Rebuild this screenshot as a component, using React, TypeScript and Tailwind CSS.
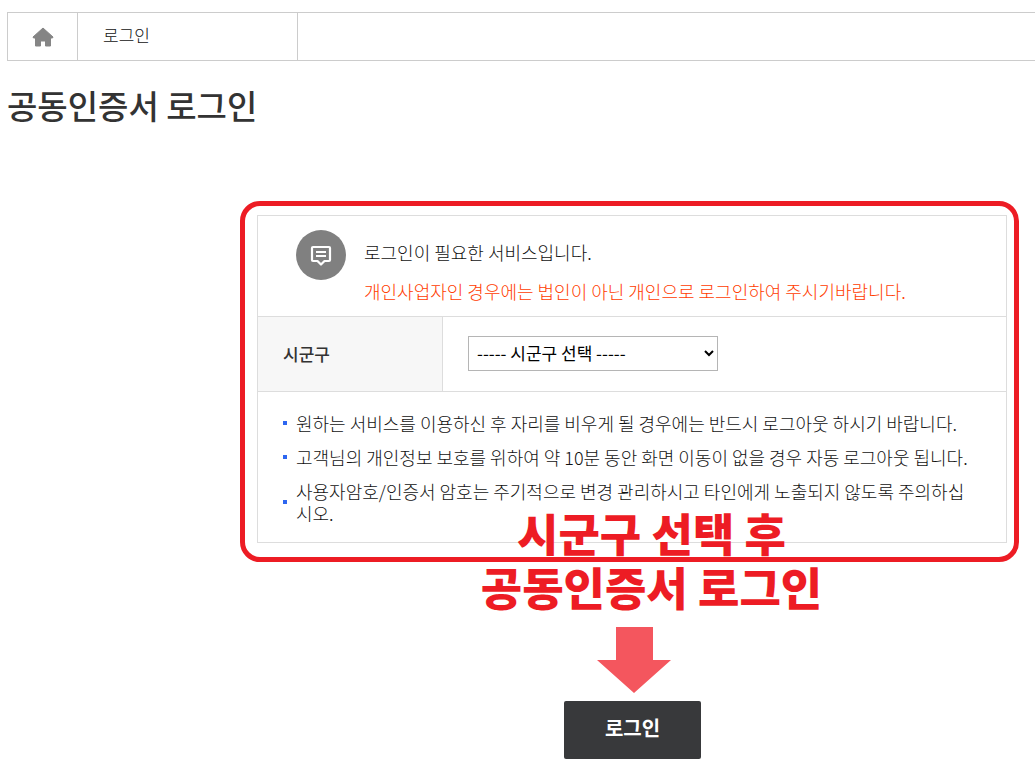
import { useState } from 'react';

const NOTICES = [
  '원하는 서비스를 이용하신 후 자리를 비우게 될 경우에는 반드시 로그아웃 하시기 바랍니다.',
  '고객님의 개인정보 보호를 위하여 약 10분 동안 화면 이동이 없을 경우 자동 로그아웃 됩니다.',
  '사용자암호/인증서 암호는 주기적으로 변경 관리하시고 타인에게 노출되지 않도록 주의하십시오.',
];

function HomeIcon() {
  return (
    <svg width="22" height="20" viewBox="0 0 22 20" fill="#858585" stroke="#858585" strokeWidth="1" strokeLinejoin="round" aria-hidden="true">
      <path d="M11 1 L21 10 L20.500 11 H18.500 V19 H13.500 V14 H8.500 V19 H3.500 V11 H1.500 L1 10 Z" />
    </svg>
  );
}

function MessageIcon() {
  return (
    <svg width="50" height="50" viewBox="0 0 50 50" fill="none" className="shrink-0" aria-hidden="true">
      <circle cx="25" cy="25" r="25" fill="#808080" />
      <path d="M17 17 H33 Q34 17 34 18 V30 Q34 31 33 31 H28.500 L25 34.500 L21.500 31 H17 Q16 31 16 30 V18 Q16 17 17 17 Z" stroke="#fff" strokeWidth="2.200" strokeLinejoin="round" />
      <path d="M20 22 H30 M20 26 H30" stroke="#fff" strokeWidth="2" />
    </svg>
  );
}

function Breadcrumb() {
  return (
    <nav className="flex h-[49px] border border-r-0 border-[#ccc]">
      <a href="#home" aria-label="홈" className="flex w-[70px] items-center justify-center border-r border-[#ccc]">
        <HomeIcon />
      </a>
      <a href="#login" className="flex w-[220px] items-center border-r border-[#ccc] px-[25px] pb-1 text-[17px] font-light text-[#111]">
        로그인
      </a>
    </nav>
  );
}

function LoginPanel() {
  const [city, setCity] = useState('');

  return (
    <div className="border border-[#ddd]">
      <div className="flex items-start gap-[18px] pt-[14px] pr-4 pb-[13px] pl-[38px]">
        <MessageIcon />
        <div className="pt-[11px] text-[18px] leading-[22px] font-light text-[#111]">
          <p>로그인이 필요한 서비스입니다.</p>
          <p className="mt-[17px] mb-px text-[#ff3c00]">개인사업자인 경우에는 법인이 아닌 개인으로 로그인하여 주시기바랍니다.</p>
        </div>
      </div>
      <div className="flex min-h-[76px] border-y border-[#ddd]">
        <label htmlFor="city" className="flex w-[185px] items-center border-r border-[#ddd] bg-[#f7f7f7] px-[25px] text-[17px] font-medium">
          시군구
        </label>
        <div className="flex flex-1 items-center px-[25px] pb-[2px]">
          <select
            id="city"
            value={city}
            onChange={(e) => setCity(e.target.value)}
            className="h-[35px] w-[250px] border border-[#b5b5b5] bg-white px-1 pb-[2px] text-[17px] text-black"
          >
            <option value="">----- 시군구 선택 -----</option>
          </select>
        </div>
      </div>
      <ul className="flex flex-col gap-3 pt-5 pr-7 pb-[18px] pl-[25px] text-[18px] leading-[22px] font-light text-[#111]">
        {NOTICES.map((notice) => (
          <li key={notice} className="flex items-center gap-[9px]">
            <span className="h-1 w-1 shrink-0 bg-[#2d66f0]" />
            <span>{notice}</span>
          </li>
        ))}
      </ul>
    </div>
  );
}

export default function App() {
  return (
    <main className="min-h-screen bg-white pt-3 pb-4 pl-[7px] font-['Noto_Sans_CJK_KR','Noto_Sans',sans-serif] text-[#333]">
      <Breadcrumb />
      <h1 className="mt-[22px] text-[33px] leading-[44px] font-medium">공동인증서 로그인</h1>

      <div className="mt-[74px] flex justify-center pl-[217px]">
        <div className="relative w-full max-w-[779px] rounded-[20px] border-[5px] border-[#ed1c24] pt-[9px] pr-[7px] pb-[14px] pl-3">
          <LoginPanel />
          {/* handwritten-style caption laid over the frame's bottom edge */}
          <p className="pointer-events-none absolute inset-x-0 top-full -mt-[51px] pl-11 text-center text-[45px] leading-[54px] font-black text-[#ed1c24]">
            시군구 선택 후<br />
            공동인증서 로그인
          </p>
        </div>
      </div>

      <div className="mt-[65px] flex flex-col items-center pl-[223px]">
        <svg width="76" height="66" viewBox="0 0 76 66" fill="#f4565e" aria-hidden="true">
          <path d="M21 0 H58 V33 H76 L39 66 L2 33 H21 Z" />
        </svg>
        <button type="button" className="mt-2 h-[58px] w-[137px] rounded-[2px] bg-[#38393b] pb-1 text-[20px] font-bold text-white">
          로그인
        </button>
      </div>
    </main>
  );
}
